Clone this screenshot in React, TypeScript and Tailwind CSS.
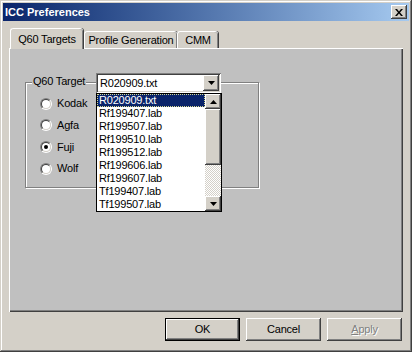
import type { ReactNode } from "react";

const raised =
  "shadow-[inset_-1px_-1px_0_#404040,inset_1px_1px_0_#fff,inset_-2px_-2px_0_#808080,inset_2px_2px_0_#d4d0c8]";
const sunken =
  "shadow-[inset_1px_1px_0_#808080,inset_-1px_-1px_0_#fff,inset_2px_2px_0_#404040,inset_-2px_-2px_0_#d4d0c8]";

const files = [
  "R020909.txt",
  "Rf199407.lab",
  "Rf199507.lab",
  "Rf199510.lab",
  "Rf199512.lab",
  "Rf199606.lab",
  "Rf199607.lab",
  "Tf199407.lab",
  "Tf199507.lab",
];

const radios = [
  { label: "Kodak", on: false },
  { label: "Agfa", on: false },
  { label: "Fuji", on: true },
  { label: "Wolf", on: false },
];

function Arrow({ up }: { up?: boolean }) {
  return (
    <svg width="7" height="4" viewBox="0 0 7 4">
      <polygon points={up ? "3.5,0 7,4 0,4" : "0,0 7,0 3.5,4"} fill="#000" />
    </svg>
  );
}

function Radio({ on }: { on: boolean }) {
  return (
    <div className="flex h-[12px] w-[12px] items-center justify-center rounded-full border border-t-[#808080] border-l-[#808080] border-r-white border-b-white">
      <div className="flex h-[10px] w-[10px] items-center justify-center rounded-full border border-t-[#404040] border-l-[#404040] border-r-[#d4d0c8] border-b-[#d4d0c8] bg-white">
        {on && <div className="h-[4px] w-[4px] rounded-full bg-black" />}
      </div>
    </div>
  );
}

function Tab({ children, active, w }: { children: ReactNode; active?: boolean; w: string }) {
  return (
    <div
      className={`${w} flex justify-center rounded-t-[3px] border-t border-l border-t-white border-l-white shadow-[inset_-1px_0_0_#808080,1px_0_0_#404040] bg-[#d4d0c8] ${
        active ? "relative z-10 -mb-px h-[21px] pt-[4px]" : "h-[17px] pt-[2px]"
      }`}
    >
      <span className="whitespace-nowrap leading-[13px]">{children}</span>
    </div>
  );
}

function Button({ children, def, disabled }: { children: ReactNode; def?: boolean; disabled?: boolean }) {
  return (
    <div
      className={`flex h-[23px] w-[75px] items-center justify-center bg-[#d4d0c8] ${
        def ? "border border-black" : ""
      } ${raised} ${disabled ? "text-[#808080] [text-shadow:1px_1px_0_#fff]" : ""}`}
    >
      {children}
    </div>
  );
}

export default function App() {
  return (
    <div className="flex h-[352px] w-[412px] flex-col bg-[#d4d0c8] p-[3px] font-['Liberation_Sans',Arial,sans-serif] text-[11px] tracking-[-0.2px] text-black shadow-[inset_-1px_-1px_0_#404040,inset_1px_1px_0_#d4d0c8,inset_-2px_-2px_0_#808080,inset_2px_2px_0_#fff]">
      <div className="flex h-[18px] items-center justify-between bg-linear-to-r from-[#0a246a] to-[#a6caf0] pl-[2px] pr-[2px]">
        <span className="text-[11px] font-bold leading-none tracking-normal text-white">ICC Preferences</span>
        <div className={`flex h-[14px] w-[16px] items-center justify-center bg-[#d4d0c8] ${raised}`}>
          <svg width="8" height="7" viewBox="0 0 8 7">
            <path d="M0 0h2l2 2.5L6 0h2L5 3.5 8 7H6L4 4.5 2 7H0l3-3.5z" fill="#000" />
          </svg>
        </div>
      </div>

      <div className="mt-[7px] px-[6px]">
        <div className="flex h-[20px] items-end pl-px">
          <Tab active w="w-[73px]">Q60 Targets</Tab>
          <Tab w="w-[93px] ml-px">Profile Generation</Tab>
          <Tab w="w-[41px]">CMM</Tab>
        </div>
        <div className="h-[264px] bg-[#c0c0c0] pl-[16px] pt-[34px] shadow-[inset_1px_1px_0_#fff,inset_-1px_-1px_0_#404040,inset_-2px_-2px_0_#808080]">
          <div className="relative h-[106px] w-[234px] border border-[#808080] shadow-[inset_1px_1px_0_#fff,1px_1px_0_#fff]">
            <span className="absolute left-[6px] top-[-8px] bg-[#c0c0c0] px-px leading-[13px]">Q60 Target</span>

            <div className={`absolute left-[70px] top-[-10px] flex h-[20px] w-[125px] items-center bg-white pr-[2px] ${sunken}`}>
              <span className="flex-1 pl-[4px] leading-[13px]">R020909.txt</span>
              <div className={`flex h-[16px] w-[16px] items-center justify-center bg-[#d4d0c8] ${raised}`}>
                <Arrow />
              </div>
            </div>

            <div className="flex flex-col pl-[14px] pt-[10px]">
              {radios.map((r) => (
                <div key={r.label} className="flex h-[21.67px] items-center gap-[5px]">
                  <Radio on={r.on} />
                  <span className="leading-[13px]">{r.label}</span>
                </div>
              ))}
            </div>

            <div className="absolute left-[70px] top-[10px] z-20 flex h-[119px] w-[126px] border border-black bg-white">
              <div className="flex flex-1 flex-col">
                {files.map((f, i) => (
                  <div
                    key={f}
                    className={`h-[13px] pl-[1px] leading-[11px] ${
                      i === 0 ? "border border-dotted border-[#d8d890] bg-[#0a246a] text-white" : "border border-transparent"
                    }`}
                  >
                    {f}
                  </div>
                ))}
              </div>
              <div className="flex w-[16px] flex-col">
                <div className={`flex h-[15px] items-center justify-center bg-[#d4d0c8] ${raised}`}>
                  <Arrow up />
                </div>
                <div className={`h-[56px] bg-[#d4d0c8] ${raised}`} />
                <div className="flex-1 bg-[repeating-conic-gradient(#fff_0_25%,#d4d0c8_0_50%)] bg-[length:2px_2px]" />
                <div className={`flex h-[15px] items-center justify-center bg-[#d4d0c8] ${raised}`}>
                  <Arrow />
                </div>
              </div>
            </div>
          </div>
        </div>
      </div>

      <div className="mt-[6px] flex justify-end gap-[6px] pr-[7px]">
        <Button def>OK</Button>
        <Button>Cancel</Button>
        <Button disabled>
          <span>
            <span className="underline">A</span>pply
          </span>
        </Button>
      </div>
    </div>
  );
}
